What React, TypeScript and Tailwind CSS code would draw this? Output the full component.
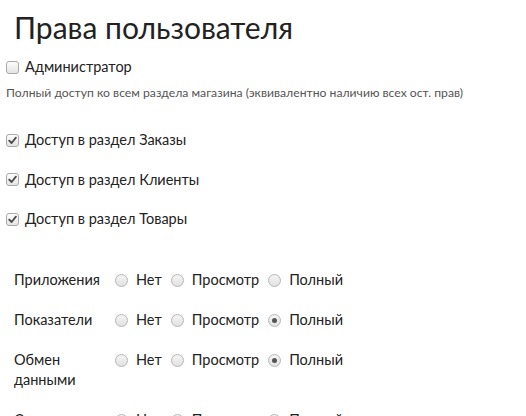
import React from 'react';

function Checkbox({ checked }: { checked?: boolean }) {
  return (
    <span className="inline-flex items-center justify-center w-[13px] h-[13px] rounded-[3px] border border-[#a9a9a9] bg-gradient-to-b from-[#fdfdfd] to-[#e4e4e4] shrink-0">
      {checked && (
        <svg width="9" height="9" viewBox="0 0 9 9">
          <path d="M1.2 4.6 L3.6 7 L7.9 1.6" fill="none" stroke="#4a4a4a" strokeWidth="1.8" strokeLinecap="round" strokeLinejoin="round" />
        </svg>
      )}
    </span>
  );
}

function Radio({ checked }: { checked?: boolean }) {
  return (
    <span className="inline-flex items-center justify-center w-[13px] h-[13px] rounded-full border border-[#b5b5b5] bg-gradient-to-b from-[#f4f4f4] to-[#e2e2e2] shrink-0">
      {checked && <span className="w-[5px] h-[5px] rounded-full bg-[#555]" />}
    </span>
  );
}

const sections = [
  'Доступ в раздел Заказы',
  'Доступ в раздел Клиенты',
  'Доступ в раздел Товары',
];

const rows: { label: string; value: number }[] = [
  { label: 'Приложения', value: -1 },
  { label: 'Показатели', value: 2 },
  { label: 'Обмен данными', value: 2 },
  { label: 'Справочники', value: 2 },
];

const options = ['Нет', 'Просмотр', 'Полный'];

export default function App() {
  return (
    <div className="w-[526px] h-[416px] overflow-hidden bg-white text-[#222] font-['Lato','Open_Sans',sans-serif]">
      <h1 className="pl-[14px] pt-[10px] text-[30px] leading-[34px] font-normal">Права пользователя</h1>

      <div className="mt-[13px] pl-[6px] flex items-center gap-[6px] h-[20px]">
        <Checkbox />
        <span className="text-[14.5px]">Администратор</span>
      </div>
      <p className="pl-[6px] mt-[8px] text-[12.2px] leading-[16px] text-[#555]">
        Полный доступ ко всем раздела магазина (эквивалентно наличию всех ост. прав)
      </p>

      <div className="mt-[29px] flex flex-col gap-[19.5px]">
        {sections.map((s) => (
          <div key={s} className="pl-[6px] flex items-center gap-[6px] h-[20px]">
            <Checkbox checked />
            <span className="text-[14.5px]">{s}</span>
          </div>
        ))}
      </div>

      <div className="mt-[31px] ml-[4px] flex flex-col text-[14.5px] leading-[20px]">
        {rows.map((r) => (
          <div key={r.label} className="flex items-start py-[10px]">
            <div className="w-[111px] shrink-0 pl-[10px] pr-[11px]">{r.label}</div>
            <div className="flex items-center h-[20px]">
              {options.map((o, i) => (
                <label key={o} className="flex items-center gap-[8px] mr-[9px]">
                  <Radio checked={r.value === i} />
                  <span>{o}</span>
                </label>
              ))}
            </div>
          </div>
        ))}
      </div>
    </div>
  );
}
